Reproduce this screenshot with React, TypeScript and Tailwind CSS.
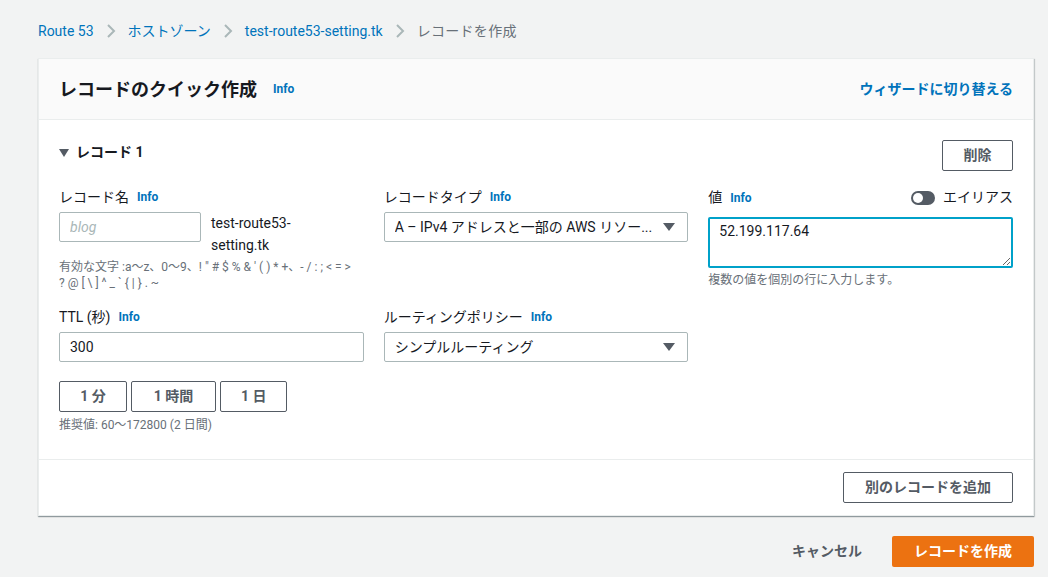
import React from "react";

const font = "font-['Roboto','Noto_Sans_CJK_JP',sans-serif]";

const Info = () => (
  <span className="ml-2 text-[12px] font-bold text-[#0073bb]">Info</span>
);

const Chevron = () => (
  <svg width="10" height="16" viewBox="0 0 10 16" className="mx-3">
    <path d="M2 2 L8 8 L2 14" fill="none" stroke="#aab7b8" strokeWidth="2" />
  </svg>
);

const Caret = () => (
  <svg width="12" height="10" viewBox="0 0 12 10">
    <path d="M0 1 H12 L6 9 Z" fill="#545b64" />
  </svg>
);

const Label: React.FC<{ text: string }> = ({ text }) => (
  <div className="flex h-5 items-center text-[14px] text-[#16191f]">
    {text}
    <Info />
  </div>
);

const OutlineButton: React.FC<{ children: React.ReactNode; className?: string }> = ({
  children,
  className,
}) => (
  <button
    className={
      "h-[31px] whitespace-nowrap rounded-[2px] border border-[#545b64] bg-white px-5 text-[14px] font-bold text-[#545b64] " +
      (className ?? "")
    }
  >
    {children}
  </button>
);

export default function App() {
  return (
    <div className={`${font} min-h-[577px] bg-[#f2f3f3] pl-[38px] pr-[14px] pt-[21px] text-[#16191f]`}>
      <nav className="flex h-5 items-center text-[14px]">
        <span className="text-[#0073bb]">Route 53</span>
        <Chevron />
        <span className="text-[#0073bb]">ホストゾーン</span>
        <Chevron />
        <span className="text-[#0073bb]">test-route53-setting.tk</span>
        <Chevron />
        <span className="tracking-[0.3px] text-[#687078]">レコードを作成</span>
      </nav>

      <div className="mt-[17px] border border-[#eaeded] bg-white shadow-[0_1px_1px_0_rgba(0,28,36,0.3),1px_1px_1px_0_rgba(0,28,36,0.15)]">
        <div className="flex h-[61px] items-center justify-between border-b border-[#eaeded] bg-[#fafafa] px-5">
          <div className="flex items-center">
            <h1 className="text-[18px] font-bold text-[#16191f]">レコードのクイック作成</h1>
            <span className="ml-4 text-[12px] font-bold text-[#0073bb]">Info</span>
          </div>
          <span className="text-[14px] font-bold text-[#0073bb]">ウィザードに切り替える</span>
        </div>

        <div className="px-5 pb-[26px] pt-5">
          <div className="flex items-start justify-between">
            <div className="mt-[2px] flex items-center text-[14px] font-bold">
              <svg width="10" height="8" viewBox="0 0 10 8" className="mr-[7px]">
                <path d="M0 0 H10 L5 8 Z" fill="#545b64" />
              </svg>
              レコード 1
            </div>
            <OutlineButton className="w-[71px] px-0">削除</OutlineButton>
          </div>

          <div className="mt-4 grid grid-cols-3 gap-x-5">
            <div>
              <Label text="レコード名" />
              <div className="mt-[5px] flex items-start">
                <input
                  placeholder="blog"
                  className="h-[30px] w-[142px] rounded-[2px] border border-[#aab7b8] px-[10px] text-[14px] italic placeholder:text-[#aab7b8]"
                />
                <div className="ml-[10px] text-[14px] leading-[22px]">
                  test-route53-
                  <br />
                  setting.tk
                </div>
              </div>
              <div className="mt-[3px] text-[12px] leading-[16px] text-[#687078]">
                有効な文字 :a～z、0～9、! " # $ % &amp; ' ( ) * +、- / : ; &lt; = &gt;
                <br />
                ? @ [ \ ] ^ _ ` {"{"} | {"}"} . ~
              </div>
            </div>

            <div>
              <Label text="レコードタイプ" />
              <div className="mt-[5px] flex h-[30px] items-center justify-between rounded-[2px] border border-[#aab7b8] pl-[10px] pr-[12px] text-[14px]">
                <span className="truncate">A – IPv4 アドレスと一部の AWS リソー...</span>
                <Caret />
              </div>
            </div>

            <div>
              <div className="flex items-center justify-between">
                <Label text="値" />
                <div className="flex items-center text-[14px]">
                  <div className="relative mr-[8px] h-[14px] w-[24px] rounded-full bg-[#545b64]">
                    <div className="absolute left-[2px] top-[2px] h-[10px] w-[10px] rounded-full bg-white" />
                  </div>
                  エイリアス
                </div>
              </div>
              <textarea
                defaultValue="52.199.117.64"
                className="mt-[9px] block h-[51px] w-full resize-y rounded-[2px] border-2 border-[#00a1c9] px-[9px] py-[2px] text-[14px] outline-none"
              />
              <div className="mt-[4px] text-[12px] leading-[16px] text-[#687078]">
                複数の値を個別の行に入力します。
              </div>
            </div>
          </div>

          <div className="mt-4 grid grid-cols-3 gap-x-5">
            <div>
              <Label text="TTL (秒)" />
              <input
                defaultValue="300"
                className="mt-[5px] h-[30px] w-full rounded-[2px] border border-[#aab7b8] px-[10px] text-[14px]"
              />
            </div>
            <div>
              <Label text="ルーティングポリシー" />
              <div className="mt-[5px] flex h-[30px] items-center justify-between rounded-[2px] border border-[#aab7b8] pl-[10px] pr-[12px] text-[14px]">
                <span>シンプルルーティング</span>
                <Caret />
              </div>
            </div>
          </div>

          <div className="mt-[19px] flex gap-[4px]">
            <OutlineButton className="w-[68px] px-0">1 分</OutlineButton>
            <OutlineButton className="w-[85px] px-0">1 時間</OutlineButton>
            <OutlineButton className="w-[67px] px-0">1 日</OutlineButton>
          </div>
          <div className="mt-[5px] text-[12px] leading-[16px] text-[#687078]">
            推奨値: 60～172800 (2 日間)
          </div>
        </div>

        <div className="flex justify-end border-t border-[#eaeded] px-5 py-3">
          <OutlineButton className="w-[170px] px-0">別のレコードを追加</OutlineButton>
        </div>
      </div>

      <div className="mt-5 flex items-center justify-end">
        <span className="mr-[30px] text-[14px] font-bold text-[#545b64]">キャンセル</span>
        <button className="h-[31px] w-[142px] rounded-[2px] bg-[#ec7211] text-[14px] font-bold text-white">
          レコードを作成
        </button>
      </div>
    </div>
  );
}
